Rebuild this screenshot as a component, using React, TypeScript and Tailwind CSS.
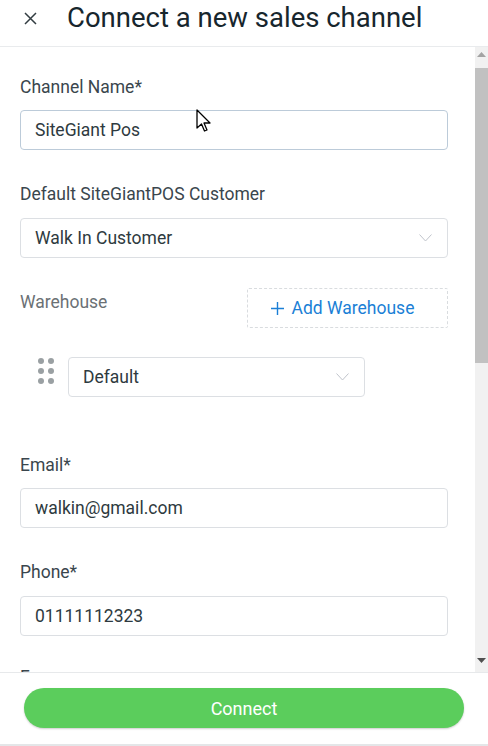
import React from "react";

const Chevron = () => (
  <svg width="13" height="8" viewBox="0 0 13 8" fill="none">
    <path d="M0.5 0.5 L6.5 7 L12.5 0.5" stroke="#c0c4cc" strokeWidth="1" />
  </svg>
);

const Label = ({ children, muted }: { children: React.ReactNode; muted?: boolean }) => (
  <div className={`text-[17.5px] leading-[20px] ${muted ? "text-[#6b7175]" : "text-[#3a464d]"}`}>{children}</div>
);

const Field = ({ value, focused, select }: { value: string; focused?: boolean; select?: boolean }) => (
  <div
    className={`h-[40px] w-full rounded-[4px] border ${focused ? "border-[#bccbd9]" : "border-[#dcdfe3]"} flex items-center justify-between pl-[14px] pr-[15px] text-[17.5px] text-[#2e3a40]`}
  >
    <span>{value}</span>
    {select && <Chevron />}
  </div>
);

export default function App() {
  return (
    <div className="w-[488px] h-[746px] bg-white flex flex-col overflow-hidden relative" style={{ fontFamily: "Roboto, 'Liberation Sans', sans-serif" }}>
      {/* header */}
      <div className="h-[47px] flex items-center shrink-0 border-b border-[#e9ebed]">
        <svg className="ml-[24px] -mt-[9px]" width="13" height="13" viewBox="0 0 13 13">
          <path d="M1 1 L12 12 M12 1 L1 12" stroke="#333d42" strokeWidth="1.5" />
        </svg>
        <div className="ml-[30px] text-[27.5px] font-normal leading-[30px] text-[#17262d] -mt-[11px]">Connect a new sales channel</div>
      </div>

      {/* body */}
      <div className="flex h-[625px] shrink-0">
        <div className="flex-1 overflow-hidden">
          <div className="pl-[20px] pr-[27px]">
            <div className="pt-[30px]">
              <Label>Channel Name*</Label>
            </div>
            <div className="mt-[13px]">
              <Field value="SiteGiant Pos" focused />
            </div>
            <div className="mt-[34px]">
              <Label>Default SiteGiantPOS Customer</Label>
            </div>
            <div className="mt-[14px]">
              <Field value="Walk In Customer" select />
            </div>
            <div className="mt-[30px] flex items-start justify-between">
              <div className="mt-[4px]">
                <Label muted>Warehouse</Label>
              </div>
              <div className="w-[201px] h-[40px] border border-dashed border-[#d9dcdf] rounded-[2px] flex items-center justify-center pr-[10px] text-[#1b7fd6] text-[17.5px] gap-[8px]">
                <svg width="13" height="13" viewBox="0 0 13 13">
                  <path d="M6.5 0 V13 M0 6.5 H13" stroke="#1b7fd6" strokeWidth="1.4" />
                </svg>
                <span>Add Warehouse</span>
              </div>
            </div>
            <div className="mt-[29px] flex items-center">
              <div className="ml-[18px] grid grid-cols-2 gap-x-[4px] gap-y-[4px] -mt-[12px]">
                {Array.from({ length: 6 }).map((_, i) => (
                  <div key={i} className="w-[6px] h-[6px] rounded-full bg-[#9aa0a3]" />
                ))}
              </div>
              <div className="ml-[14px] w-[297px]">
                <Field value="Default" select />
              </div>
            </div>
            <div className="mt-[58px]">
              <Label>Email*</Label>
            </div>
            <div className="mt-[13px]">
              <Field value="walkin@gmail.com" />
            </div>
            <div className="mt-[34px]">
              <Label>Phone*</Label>
            </div>
            <div className="mt-[14px]">
              <Field value="01111112323" />
            </div>
            <div className="mt-[31px]">
              <Label>Fax</Label>
            </div>
          </div>
        </div>
        {/* scrollbar */}
        <div className="w-[13px] bg-[#f1f1f1] flex flex-col items-center">
          <svg className="mt-[5px]" width="9" height="5" viewBox="0 0 9 5">
            <path d="M0 5 L4.5 0 L9 5 Z" fill="#a3a3a3" />
          </svg>
          <div className="mt-[11px] w-[13px] h-[295px] bg-[#c1c1c1]" />
          <div className="flex-1" />
          <svg className="mb-[9px]" width="9" height="5" viewBox="0 0 9 5">
            <path d="M0 0 L4.5 5 L9 0 Z" fill="#505050" />
          </svg>
        </div>
      </div>

      {/* footer */}
      <div className="flex-1 border-t border-[#e7e9eb] flex flex-col">
        <div className="flex-1 flex items-start justify-center pt-[15px]">
          <div className="w-[440px] h-[40px] rounded-full bg-[#5bcd5c] text-white text-[18px] flex items-center justify-center shadow-[0_1px_2px_rgba(0,0,0,0.2)]">
            Connect
          </div>
        </div>
        <div className="h-[2px] bg-[#e4e6e8]" />
      </div>

      {/* mouse cursor */}
      <svg className="absolute left-[196px] top-[109px]" width="20" height="26" viewBox="0 0 20 26">
        <path d="M1 1 L1 19 L5.5 15 L8.5 22 L11 21 L8 14 L14 14 Z" fill="white" stroke="black" strokeWidth="1.3" strokeLinejoin="round" />
      </svg>
    </div>
  );
}
